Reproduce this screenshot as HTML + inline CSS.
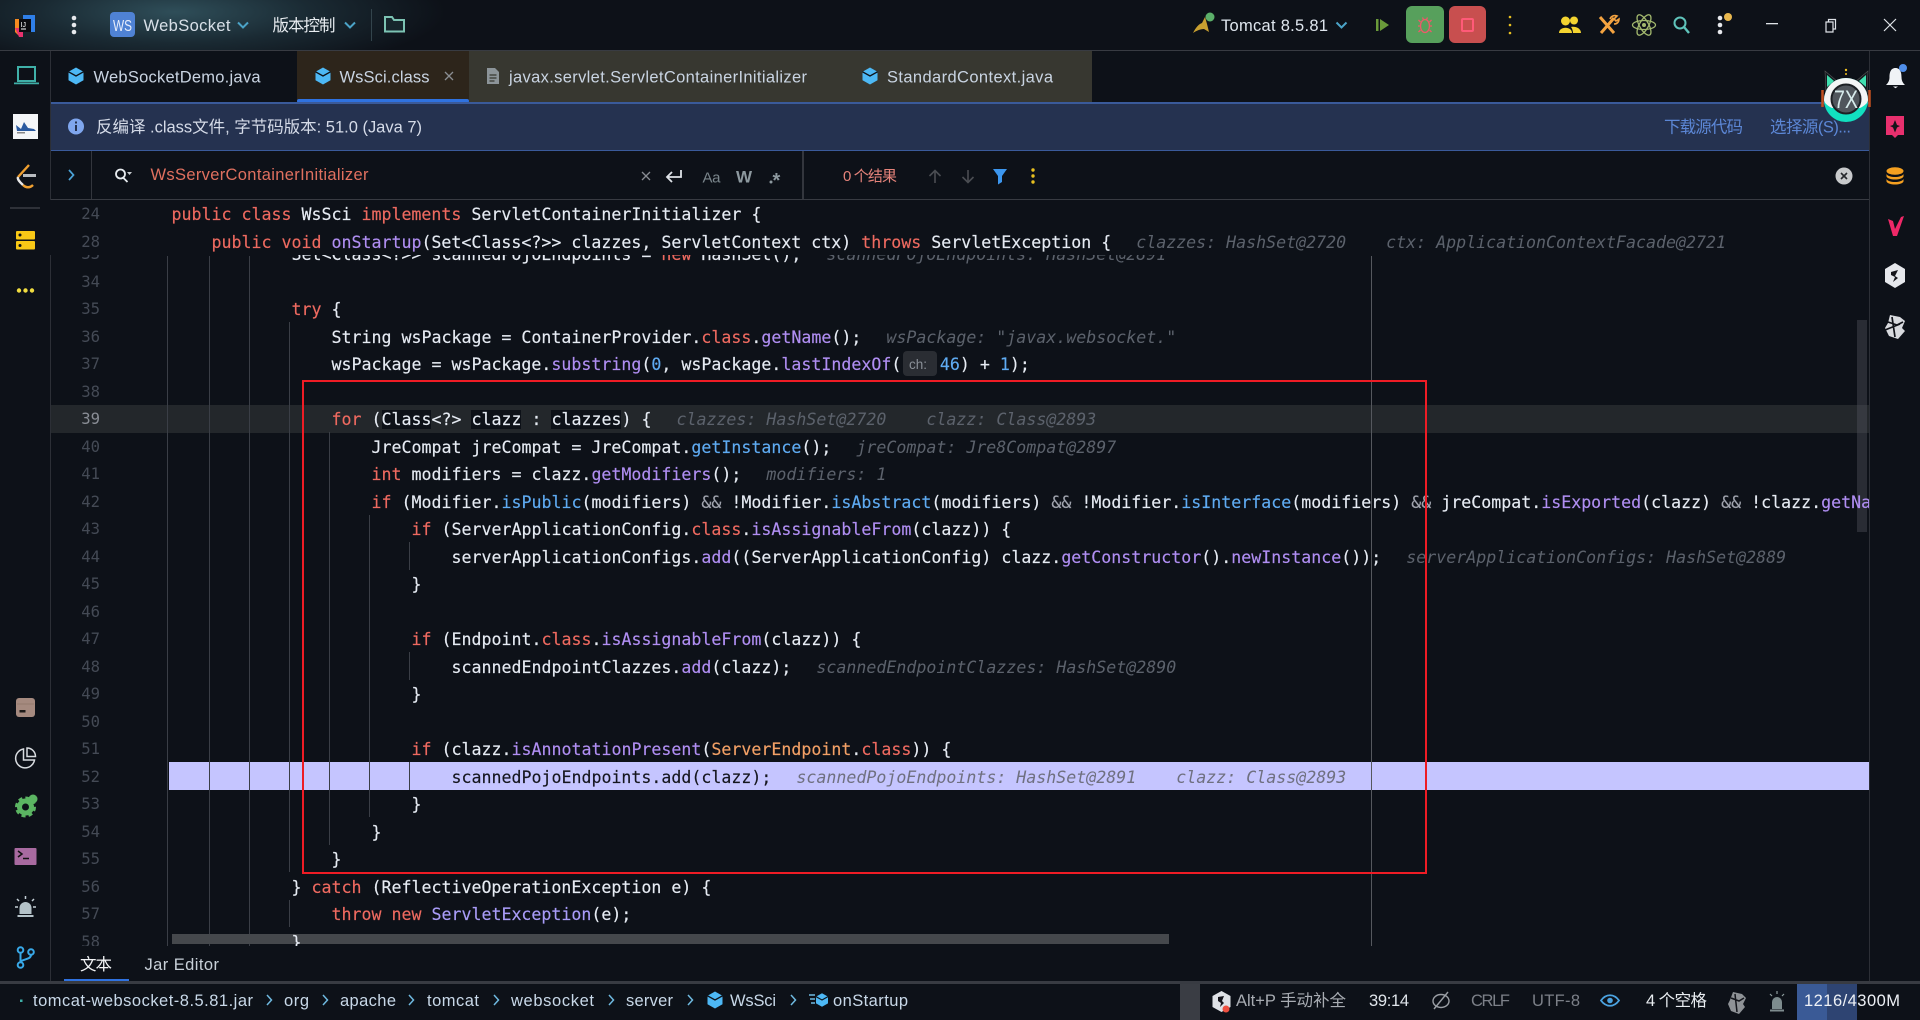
<!DOCTYPE html>
<html lang="zh"><head><meta charset="utf-8"><title>WsSci.class</title>
<style>
html,body{margin:0;padding:0;width:1920px;height:1020px;overflow:hidden;background:#0d1118}
#top{position:absolute;left:0;top:0;width:1920px;height:50px;background:radial-gradient(ellipse 270px 62px at 175px 12px,#2f4e59 0%,#1a2a33 50%,#0d1118 100%)}
.b{position:absolute}
#ed{position:absolute;left:0;top:0;width:1869px;height:1020px;overflow:hidden;clip-path:inset(255px 0 74px 0)}
#st{position:absolute;left:0;top:0;width:1869px;height:1020px;overflow:hidden;clip-path:inset(200px 0 765px 0);background:#0d1118}
.l,.n{position:absolute;margin-top:1px;height:27.5px;line-height:27.5px;font-family:"DejaVu Sans Mono","Liberation Mono",monospace;font-size:16.6px;letter-spacing:.006px;white-space:pre;color:#e6ebf3;font-variant-ligatures:none;-webkit-text-stroke:.15px currentColor}
.n{left:0;width:100px;text-align:right;color:#444a55;font-size:15.6px;-webkit-text-stroke:0}
.k{color:#ee6a60}.m{color:#b08ef2}.u{color:#5fabf2}.o{color:#f2a066}.g{color:#a0a4ae}
.h{color:#5c626c;font-style:italic;margin-left:25px;-webkit-text-stroke:0}
.v{background:#0d1118}
.i{position:absolute;width:1px;background:#3a3e46}
svg{position:absolute;left:0;top:0}
svg text{font-family:"Liberation Sans","WenQuanYi Zen Hei","Noto Sans CJK SC",sans-serif;font-size:16.5px}
</style></head><body>
<div id="top"></div>
<div class="b" style="left:0;top:50px;width:1920px;height:1px;background:#383b42"></div>
<div class="b" style="left:50px;top:51px;width:1px;height:930px;background:#2c2f36"></div>
<div class="b" style="left:1869px;top:51px;width:1px;height:930px;background:#2c2f36"></div>
<!-- tabs -->
<div class="b" style="left:297px;top:51px;width:172px;height:51px;background:#2d251b"></div>
<div class="b" style="left:469px;top:51px;width:623px;height:51px;background:#373730"></div>
<div class="b" style="left:297px;top:99px;width:172px;height:4px;background:#2f72e0;border-radius:2px"></div>
<div class="b" style="left:51px;top:102px;width:1818px;height:2px;background:#3a5a9a"></div>
<div class="b" style="left:51px;top:104px;width:1818px;height:46px;background:#253250"></div>
<div class="b" style="left:51px;top:150px;width:1818px;height:1px;background:#3a5a9a"></div>
<div class="b" style="left:91px;top:151px;width:1px;height:48px;background:#33363d"></div>
<div class="b" style="left:802px;top:151px;width:2px;height:48px;background:#33363d"></div>
<div class="b" style="left:51px;top:199px;width:1818px;height:1px;background:#383b42"></div>
<!-- editor backgrounds -->
<div class="b" style="left:51px;top:405px;width:1818px;height:27.5px;background:#23272b"></div>
<div class="b" style="left:169px;top:762px;width:1700px;height:28px;background:#c5c5ff"></div>
<div id="ed">
<div class="i" style="left:167px;top:256px;height:690px"></div>
<div class="i" style="left:209px;top:256px;height:690px"></div>
<div class="i" style="left:249px;top:256px;height:690px"></div>
<div class="i" style="left:289px;top:322px;height:550px"></div>
<div class="i" style="left:289px;top:900px;height:27px"></div>
<div class="i" style="left:329px;top:432px;height:413px"></div>
<div class="i" style="left:369px;top:515px;height:302px"></div>
<div class="i" style="left:409px;top:542px;height:28px"></div>
<div class="i" style="left:409px;top:652px;height:28px"></div>
<div class="i" style="left:409px;top:762px;height:28px"></div>
<div class="i" style="left:1371px;top:256px;height:690px;background:#55585e"></div>
<div class="b" style="left:172px;top:934px;width:997px;height:10px;background:#45484c"></div>
<div class="b" style="left:1857px;top:320px;width:10px;height:212px;background:rgba(80,84,92,.42)"></div>

<div class="n" style="top:240px">33</div>
<div class="l" style="top:240px;left:291.5px">Set&lt;Class&lt;?&gt;&gt; scannedPojoEndpoints = <span class="k">new</span> HashSet();<span class="h">scannedPojoEndpoints: HashSet@2891</span></div>
<div class="n" style="top:267.5px">34</div>
<div class="n" style="top:295px">35</div>
<div class="l" style="top:295px;left:291.5px"><span class="k">try</span> {</div>
<div class="n" style="top:322.5px">36</div>
<div class="l" style="top:322.5px;left:331.5px">String wsPackage = ContainerProvider.<span class="k">class</span>.<span class="m">getName</span>();<span class="h">wsPackage: "javax.websocket."</span></div>
<div class="n" style="top:350px">37</div>
<div class="l" style="top:350px;left:331.5px">wsPackage = wsPackage.<span class="m">substring</span>(<span class="u">0</span>, wsPackage.<span class="m">lastIndexOf</span>(<span style="display:inline-block;width:38.5px"></span><span class="u">46</span>) + <span class="u">1</span>);</div>
<div class="n" style="top:377.5px">38</div>
<div class="n" style="top:405px;color:#8a8e96">39</div>
<div class="l" style="top:405px;left:331.5px"><span class="k">for</span> (<span class="v">Class</span>&lt;?&gt; <span class="v">clazz</span> : <span class="v">clazzes</span>) {<span class="h">clazzes: HashSet@2720    clazz: Class@2893</span></div>
<div class="n" style="top:432.5px">40</div>
<div class="l" style="top:432.5px;left:371.5px">JreCompat jreCompat = JreCompat.<span class="u">getInstance</span>();<span class="h">jreCompat: Jre8Compat@2897</span></div>
<div class="n" style="top:460px">41</div>
<div class="l" style="top:460px;left:371.5px"><span class="k">int</span> modifiers = clazz.<span class="m">getModifiers</span>();<span class="h">modifiers: 1</span></div>
<div class="n" style="top:487.5px">42</div>
<div class="l" style="top:487.5px;left:371.5px"><span class="k">if</span> (Modifier.<span class="u">isPublic</span>(modifiers) <span class="g">&amp;&amp;</span> !Modifier.<span class="u">isAbstract</span>(modifiers) <span class="g">&amp;&amp;</span> !Modifier.<span class="u">isInterface</span>(modifiers) <span class="g">&amp;&amp;</span> jreCompat.<span class="m">isExported</span>(clazz) <span class="g">&amp;&amp;</span> !clazz.<span class="m">getNa</span></div>
<div class="n" style="top:515px">43</div>
<div class="l" style="top:515px;left:411.5px"><span class="k">if</span> (ServerApplicationConfig.<span class="k">class</span>.<span class="m">isAssignableFrom</span>(clazz)) {</div>
<div class="n" style="top:542.5px">44</div>
<div class="l" style="top:542.5px;left:451.5px">serverApplicationConfigs.<span class="m">add</span>((ServerApplicationConfig) clazz.<span class="m">getConstructor</span>().<span class="m">newInstance</span>());<span class="h">serverApplicationConfigs: HashSet@2889</span></div>
<div class="n" style="top:570px">45</div>
<div class="l" style="top:570px;left:411.5px">}</div>
<div class="n" style="top:597.5px">46</div>
<div class="n" style="top:625px">47</div>
<div class="l" style="top:625px;left:411.5px"><span class="k">if</span> (Endpoint.<span class="k">class</span>.<span class="m">isAssignableFrom</span>(clazz)) {</div>
<div class="n" style="top:652.5px">48</div>
<div class="l" style="top:652.5px;left:451.5px">scannedEndpointClazzes.<span class="m">add</span>(clazz);<span class="h">scannedEndpointClazzes: HashSet@2890</span></div>
<div class="n" style="top:680px">49</div>
<div class="l" style="top:680px;left:411.5px">}</div>
<div class="n" style="top:707.5px">50</div>
<div class="n" style="top:735px">51</div>
<div class="l" style="top:735px;left:411.5px"><span class="k">if</span> (clazz.<span class="m">isAnnotationPresent</span>(<span class="o">ServerEndpoint</span>.<span class="k">class</span>)) {</div>
<div class="n" style="top:762.5px">52</div>
<div class="l" style="top:762.5px;left:451.5px;color:#15161e">scannedPojoEndpoints.add(clazz);<span class="h" style="color:#6f7080">scannedPojoEndpoints: HashSet@2891    clazz: Class@2893</span></div>
<div class="n" style="top:790px">53</div>
<div class="l" style="top:790px;left:411.5px">}</div>
<div class="n" style="top:817.5px">54</div>
<div class="l" style="top:817.5px;left:371.5px">}</div>
<div class="n" style="top:845px">55</div>
<div class="l" style="top:845px;left:331.5px">}</div>
<div class="n" style="top:872.5px">56</div>
<div class="l" style="top:872.5px;left:291.5px">} <span class="k">catch</span> (ReflectiveOperationException e) {</div>
<div class="n" style="top:900px">57</div>
<div class="l" style="top:900px;left:331.5px"><span class="k">throw new</span> <span style="color:#a99cf8">ServletException</span>(e);</div>
<div class="n" style="top:927.5px">58</div>
<div class="l" style="top:927.5px;left:291.5px">}</div>
</div>
<div id="st">
<div class="n" style="top:200px">24</div>
<div class="l" style="top:200px;left:171.5px"><span class="k">public class</span> WsSci <span class="k">implements</span> ServletContainerInitializer {</div>
<div class="n" style="top:227.5px">28</div>
<div class="l" style="top:227.5px;left:211.5px"><span class="k">public void</span> <span class="m">onStartup</span>(Set&lt;Class&lt;?&gt;&gt; clazzes, ServletContext ctx) <span class="k">throws</span> ServletException {<span class="h">clazzes: HashSet@2720    ctx: ApplicationContextFacade@2721</span></div>
</div>
<!-- red box -->
<div class="b" style="left:302px;top:380px;width:1121px;height:490px;border:2px solid #ee1c25"></div>
<div class="b" style="left:903px;top:351px;width:34px;height:25px;background:#2a2d33;border-radius:4px"></div>
<!-- bottom -->
<div class="b" style="left:64px;top:979px;width:65px;height:3px;background:#2f72e0"></div>
<div class="b" style="left:0;top:981px;width:1920px;height:3px;background:#383b42"></div>
<div class="b" style="left:1180px;top:984px;width:20px;height:36px;background:#3a3d44"></div>
<div class="b" style="left:1797px;top:984px;width:30px;height:36px;background:#3a5a96"></div>
<div class="b" style="left:1827px;top:984px;width:30px;height:36px;background:#2e4472"></div>

<svg width="1920" height="1020" viewBox="0 0 1920 1020">
<defs>
<g id="cube"><path d="M0-8.5 7.5-4.2V4.2L0 8.5-7.500 4.200V-4.200Z" fill="#4db8f5"/><path d="M-7.500-4.200 0 0 7.500-4.200" fill="none" stroke="#0d1118" stroke-width="1.400"/></g>
<path id="ch" d="M-5-2.500 0 2.500 5-2.500" fill="none" stroke="#4ba3c7" stroke-width="2"/>
<path id="sep" d="M-2-5 2.500 0-2 5" fill="none" stroke="#6fb9e0" stroke-width="1.500"/>
</defs>
<!-- top left -->
<path d="M15 19h8v16h-5l-3-3z" fill="#f58a1f"/><path d="M23 15h12v17h-6V20h-6z" fill="#2f7fe8"/><path d="M15 28h8v9h-4z" fill="#e8326e"/><rect x="19" y="19" width="12" height="13" fill="#0c0c10"/>
<text x="20.500" y="27" style="font-size:7px" fill="#fff">IJ</text><rect x="21" y="28.500" width="5" height="1" fill="#fff"/>
<circle cx="74" cy="18" r="2.300" fill="#e6e8ec"/><circle cx="74" cy="25" r="2.300" fill="#e6e8ec"/><circle cx="74" cy="32" r="2.300" fill="#e6e8ec"/>
<rect x="110" y="12" width="25" height="25" rx="4" fill="#4f82d4"/><text x="113" y="31" textLength="19" lengthAdjust="spacingAndGlyphs" style="font-size:16px" fill="#e8eefc">WS</text>
<text x="143.500" y="31" textLength="87" fill="#d8e0e8">WebSocket</text><use href="#ch" x="243" y="25"/>
<text x="272.500" y="31" textLength="63" fill="#e8ecf0">版本控制</text><use href="#ch" x="350" y="25"/>
<rect x="371" y="9" width="1" height="32" fill="#33444c"/>
<path d="M385 18v13.500h19V20h-10l-2-3h-7z" fill="#16262c" stroke="#7cc3b3" stroke-width="2"/>
<!-- top right -->
<path d="M1193 33c3-6 6-9 9-10l3-6 2 7 2 8-5-3c-4 0-8 2-11 4z" fill="#c8a030"/><circle cx="1210" cy="17" r="4.500" fill="#5cb06a"/>
<text x="1221" y="31" textLength="107" fill="#dfe6ee">Tomcat 8.5.81</text><use href="#ch" x="1341.500" y="25"/>
<path d="M1376 19h2.500v12H1376zM1380 19l9 6-9 6z" fill="#6a9a3a"/>
<rect x="1406" y="6" width="38" height="37" rx="6" fill="#57a05c"/><rect x="1449" y="6" width="37" height="37" rx="6" fill="#c84f4f"/>
<g fill="none" stroke="#ee5a6a" stroke-width="1.300"><ellipse cx="1425" cy="26" rx="4.500" ry="6.500"/><path d="M1420.500 22l-2-2M1429.500 22l2-2M1420 26h-2M1430 26h2M1420.500 30l-2 2M1429.500 30l2 2M1422.500 17.500l1 2M1427.500 17.500l-1 2"/></g>
<rect x="1462" y="19" width="11" height="12" rx="1" fill="none" stroke="#ff5a78" stroke-width="2"/>
<circle cx="1510" cy="17" r="1.300" fill="#e8c020"/><circle cx="1510" cy="25" r="1.300" fill="#e8c020"/><circle cx="1510" cy="33" r="1.300" fill="#e8c020"/>
<g fill="#f4d430"><circle cx="1565.500" cy="21" r="4.500"/><circle cx="1574" cy="20.500" r="4"/><path d="M1559 33c0-7 13-7 13 0zM1573 33c0-2-1-5-2-6 4-1 10 1 10 6z"/></g>
<g fill="none" stroke="#f4a340" stroke-width="3"><path d="M1600 17l14 16M1614 18l-13 15"/><path d="M1610 19c1-3 4-4 7-3l-3 3 2 2 3-2c0 3-2 5-5 5" stroke-width="1.600"/></g>
<g fill="none" stroke="#a3b96e" stroke-width="1.300"><ellipse cx="1644" cy="25" rx="11.500" ry="4.500"/><ellipse cx="1644" cy="25" rx="11.500" ry="4.500" transform="rotate(60 1644 25)"/><ellipse cx="1644" cy="25" rx="11.500" ry="4.500" transform="rotate(120 1644 25)"/></g><circle cx="1644" cy="25" r="2" fill="#a3b96e"/>
<circle cx="1680" cy="23" r="5.500" fill="none" stroke="#5fc4bb" stroke-width="2"/><path d="M1684 27l5 6" stroke="#5fc4bb" stroke-width="2.400"/>
<circle cx="1720" cy="18" r="2.300" fill="#e6e8ec"/><circle cx="1720" cy="25" r="2.300" fill="#e6e8ec"/><circle cx="1720" cy="32" r="2.300" fill="#e6e8ec"/><circle cx="1728" cy="17" r="4" fill="#e9b84f"/>
<rect x="1766" y="23" width="12" height="1.300" fill="#dfe3e8"/>
<path d="M1826 22h7v10h-7zM1828.500 22v-2.500h7v9.500h-2.500" fill="none" stroke="#dfe3e8" stroke-width="1.200"/>
<path d="M1884 19l12 12M1896 19l-12 12" stroke="#dfe3e8" stroke-width="1.200"/>
<!-- tabs -->
<use href="#cube" x="76" y="76"/><text x="93.500" y="82.500" textLength="167" fill="#c9d4e2">WebSocketDemo.java</text>
<use href="#cube" x="323" y="76"/><text x="339.500" y="82.500" textLength="90" fill="#c9d4e2">WsSci.class</text>
<path d="M445 72l8 8M453 72l-8 8" stroke="#8a8e92" stroke-width="1.300"/>
<path d="M487 68h8l4 4v12h-12z" fill="#8c9499"/><path d="M489.500 75h7M489.500 78h7M489.500 81h5" stroke="#373730" stroke-width="1.200"/>
<text x="509" y="82.500" textLength="298" fill="#c9d4e2">javax.servlet.ServletContainerInitializer</text>
<use href="#cube" x="870" y="76"/><text x="887" y="82.500" textLength="166" fill="#c9d4e2">StandardContext.java</text>
<!-- banner -->
<circle cx="76" cy="126.500" r="8" fill="#7fa6ee"/><rect x="75" y="125" width="2" height="6" fill="#253250"/><rect x="75" y="121.500" width="2" height="2" fill="#253250"/>
<text x="96" y="132.500" textLength="326" fill="#d5dbe8">反编译 .class文件, 字节码版本: 51.0 (Java 7)</text>
<text x="1664" y="132.500" textLength="79" fill="#5c87d6">下载源代码</text><text x="1770" y="132.500" textLength="81" fill="#5c87d6">选择源(S)...</text>
<!-- search -->
<path d="M69 170l4.500 5-4.500 5" fill="none" stroke="#4ba3d7" stroke-width="1.700"/>
<circle cx="120.500" cy="174" r="4.500" fill="none" stroke="#e8ecf0" stroke-width="1.800"/><path d="M123.500 178l4 4" stroke="#e8ecf0" stroke-width="1.800"/><path d="M127 172h5l-2.500 3z" fill="#c8ccd0"/>
<text x="150.500" y="180" textLength="218" fill="#e0705f">WsServerContainerInitializer</text>
<path d="M642 172l8 8M650 172l-8 8" stroke="#888c92" stroke-width="1.300"/>
<path d="M681 170v7h-13M672 172l-5 5 5 5" fill="none" stroke="#dfe3e8" stroke-width="1.800"/>
<text x="702.500" y="182.500" textLength="18" style="font-size:15px" fill="#7b868c">Aa</text>
<text x="736" y="182.500" textLength="16" style="font-size:17px;font-weight:bold" fill="#8d999f">W</text>
<circle cx="771" cy="182" r="1.500" fill="#8d999f"/><text x="772.500" y="187" style="font-size:20px;font-weight:bold" fill="#8d999f">*</text>
<text x="843" y="181" textLength="54" style="font-size:15px" fill="#e5837a">0 个结果</text>
<path d="M935 183v-12M929.500 176l5.500-5.500 5.500 5.500M968 170v12M962.500 177l5.500 5.500 5.500-5.500" fill="none" stroke="#4a4d52" stroke-width="1.600"/>
<path d="M993 169h14l-5 7v6l-4 2.500v-8.500z" fill="#3c96ee"/>
<circle cx="1033" cy="170" r="1.700" fill="#e8c020"/><circle cx="1033" cy="176" r="1.700" fill="#e8c020"/><circle cx="1033" cy="182" r="1.700" fill="#e8c020"/>
<circle cx="1844" cy="176" r="8.500" fill="#c8cacc"/><path d="M1841 173l6 6M1847 173l-6 6" stroke="#26282c" stroke-width="1.600"/>
<!-- left strip -->
<path d="M18 67h17v14H18z" fill="#0d1118" stroke="#3fb0a8" stroke-width="2"/><path d="M14 82.500h25v1.800H14z" fill="#3fb0a8"/>
<rect x="13" y="114" width="25" height="25" fill="#f4f6f8"/><path d="M16 125l5 4 3-7 4 6 6 1 2 2H17z" fill="#2a5aa0"/><rect x="17" y="132" width="8" height="1.500" fill="#888"/>
<path d="M29 165l-11 12" fill="none" stroke="#f0a030" stroke-width="2.400"/><path d="M18 177c-1 3 3 6 5 8" fill="none" stroke="#e8e8e8" stroke-width="2.400"/><path d="M23 185c3 3 7 3 10 0" fill="none" stroke="#f0a030" stroke-width="2.400"/><rect x="23" y="174" width="13" height="3" fill="#b8bcc0"/>
<rect x="10" y="207" width="30" height="2" fill="#2e3138"/>
<rect x="16" y="231" width="19" height="8.500" rx="1" fill="#f8c816"/><rect x="16" y="241" width="19" height="8.500" rx="1" fill="#f8c816"/><circle cx="20" cy="235" r="1.500" fill="#0d1118"/><circle cx="20" cy="245.500" r="1.500" fill="#0d1118"/>
<circle cx="19" cy="290.500" r="2.200" fill="#f0dc40"/><circle cx="25.500" cy="290.500" r="2.200" fill="#f0dc40"/><circle cx="32" cy="290.500" r="2.200" fill="#f0dc40"/>
<rect x="16" y="698" width="19" height="19" rx="3" fill="#a58a7f"/><rect x="19.500" y="710" width="6" height="2.500" fill="#1d1a18"/><path d="M17 704h17" stroke="#8c7369" stroke-width=".8"/>
<path d="M23.500 749a9.500 9.500 0 1 0 11 11h-11z" fill="none" stroke="#d8dce0" stroke-width="1.500"/><path d="M27 748v8.500h8.500a8.500 8.500 0 0 0-8.500-8.500z" fill="none" stroke="#d8dce0" stroke-width="1.500"/>
<circle cx="25.500" cy="807" r="6" fill="none" stroke="#5bb562" stroke-width="5"/><circle cx="25.500" cy="807" r="9" fill="none" stroke="#5bb562" stroke-width="3" stroke-dasharray="4 3"/><circle cx="33" cy="799" r="4.500" fill="#5bb562"/>
<rect x="14.500" y="848" width="22" height="17" rx="1" fill="#a86aa0"/><path d="M18 851l4 3-4 3M23 858.500h6" fill="none" stroke="#111" stroke-width="1.500"/>
<path d="M19.500 914v-6a6 6 0 0 1 12 0v6z" fill="#b4c2c8"/><rect x="17.500" y="915" width="16" height="2" fill="#b4c2c8"/><path d="M25.500 896v3M17 899l2 2M34 899l-2 2M15 907h3M33 907h3" stroke="#c4d0d6" stroke-width="1.500"/>
<g fill="none" stroke="#38a9e8" stroke-width="2"><circle cx="20.500" cy="950" r="2.800"/><circle cx="20.500" cy="965" r="2.800"/><circle cx="31" cy="952" r="2.800"/><path d="M20.500 953v9M31 955c0 5-10 4-10 7"/></g>
<!-- right strip -->
<path d="M1895.500 68c-5 0-6 5-6 9 0 4-1.500 6-3.500 8h19c-2-2-3.500-4-3.500-8 0-4-1-9-6-9z" fill="#f0f3f6"/><path d="M1893 86.500h5l-2.500 1.800z" fill="#f0f3f6"/><circle cx="1903" cy="68" r="4" fill="#4f8eea"/>
<rect x="1886" y="116" width="18" height="19" fill="#e8306e"/><path d="M1892 135h6l-3 3z" fill="#e8306e"/><path d="M1895 120l2 5 3 1-3 1.500-2 5-2-5-3-1.500 3-1z" fill="#14141a"/>
<g fill="#f5a020"><ellipse cx="1895" cy="171" rx="8.500" ry="3.800"/><path d="M1886.500 174c2 4 15 4 17 0v2.500c-2 4-15 4-17 0zM1886.500 179c2 4 15 4 17 0v2.500c-2 4-15 4-17 0z"/></g>
<path d="M1888 219l5 2 2 8 6-12 3-1-7 20h-4z" fill="#f02868"/>
<path d="M1895 263l10 6v13l-10 6-10-6v-13z" fill="#e6e8ec"/><path d="M1891 272l7-2-3 6 3 2-5 4 2-5-4-2z" fill="#14141a"/>
<path d="M1890 315l10 2 5 4-3 7 3 3-7 8-9-3-4-8 3-5z" fill="#d8dade"/><path d="M1888 322l9 3 6-3M1892 317l3 20M1885 330l15-6" stroke="#101218" stroke-width="1.700" fill="none"/>
<!-- mascot -->
<path d="M1825 71l13 11-12 11zM1868 71l-13 11 12 11z" fill="#15191f" stroke="#555" stroke-width=".6"/><path d="M1827 75l7 6-7 6zM1866 75l-7 6 7 6z" fill="#3fe0b0"/>
<circle cx="1846" cy="70" r="1.200" fill="#f0c020"/><circle cx="1846" cy="74" r="1" fill="#f0c020"/>
<path d="M1822.500 90v17M1869.500 90v17" stroke="#c05020" stroke-width="2.500"/>
<circle cx="1846" cy="100" r="22" fill="#12e0c0"/><path d="M1824 100a22 22 0 0 1 44 0c0 3-4 6-8 8h-28c-4-2-8-5-8-8z" fill="#f4f6f6"/>
<circle cx="1846" cy="99" r="14.500" fill="#50565c" stroke="#1c2024" stroke-width="2"/>
<text x="1834" y="108" textLength="24" lengthAdjust="spacingAndGlyphs" style="font-size:25px" fill="#d8ecec">7X</text>
<!-- bottom tabs -->
<text x="80" y="970" textLength="32" fill="#f2f4f6">文本</text><text x="144.500" y="970" textLength="74.500" fill="#c8d0d8">Jar Editor</text>
<!-- status -->
<rect x="20" y="999.500" width="2.500" height="2.500" fill="#3fb0a8"/>
<g fill="#c8d8e8"><text x="33" y="1006" textLength="220">tomcat-websocket-8.5.81.jar</text><text x="284" y="1006" textLength="25">org</text><text x="340" y="1006" textLength="56">apache</text><text x="427" y="1006" textLength="52">tomcat</text><text x="511" y="1006" textLength="83">websocket</text><text x="626" y="1006" textLength="47">server</text><text x="730" y="1006" textLength="46">WsSci</text><text x="833" y="1006" textLength="75">onStartup</text></g>
<use href="#sep" x="269" y="1000"/><use href="#sep" x="325" y="1000"/><use href="#sep" x="411" y="1000"/><use href="#sep" x="496" y="1000"/><use href="#sep" x="611" y="1000"/><use href="#sep" x="690" y="1000"/><use href="#sep" x="793" y="1000"/>
<use href="#cube" x="715" y="1000"/><use href="#cube" transform="translate(822 1000) scale(.8)"/><path d="M809 995h6M810 999h5M811 1003h4" stroke="#6fb9e0" stroke-width="1.500"/>
<path d="M1220 992l9 5v11l-9 5-9-5v-11z" fill="#dfe2e6" transform="translate(1.500 -1)"/><path d="M1218 997l6-1-2 5 2 2-4 4 1-4-3-2z" fill="#14141a"/><circle cx="1226" cy="1009" r="3.500" fill="#ee5040"/>
<text x="1236" y="1006" textLength="110" fill="#a8acb2">Alt+P 手动补全</text>
<text x="1369" y="1006" textLength="40" fill="#dfe4ea">39:14</text>
<g fill="none" stroke="#9a9ea4" stroke-width="1.400"><ellipse cx="1441" cy="1001" rx="8" ry="6.500"/><path d="M1434 1009l14-17"/></g>
<text x="1471" y="1006" textLength="39" fill="#7c8088">CRLF</text><text x="1532" y="1006" textLength="48" fill="#7c8088">UTF-8</text>
<path d="M1601 1000.500c5-7 13-7 18 0-5 7-13 7-18 0z" fill="none" stroke="#4ba3e0" stroke-width="1.800"/><circle cx="1610" cy="1000.500" r="2.800" fill="#4ba3e0"/>
<text x="1646" y="1006" textLength="61" fill="#e8ecf0">4 个空格</text>
<path d="M1733 992l9 2 4 4-3 6 2 3-6 7-8-3-3-7 2-4z" fill="#8e9296"/><path d="M1731 998l8 3 5-3M1735 994l2 18" stroke="#14161c" stroke-width="1.500" fill="none"/>
<path d="M1772 1009v-7a5 5 0 0 1 10 0v7z" fill="#7e8c8e"/><rect x="1770" y="1009.500" width="14" height="2" fill="#7e8c8e"/><path d="M1777 991v3M1770 994l2 2M1784 994l-2 2" stroke="#8e9c9e" stroke-width="1.200"/>
<text x="1804" y="1006" textLength="96" fill="#eef1f6">1216/4300M</text>
</svg>
<!-- hint ch: -->
<div class="b" style="left:909px;top:353px;font:13.500px/23px 'Liberation Sans',sans-serif;color:#8a9098">ch:</div>
</body></html>
